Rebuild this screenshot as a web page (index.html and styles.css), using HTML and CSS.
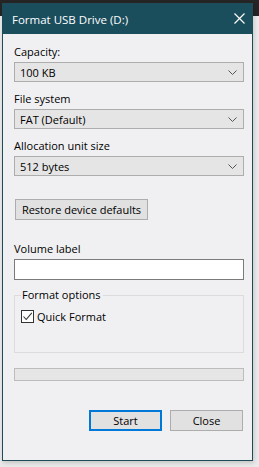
FILE: index.html
```html
<!doctype html>
<html lang="en">
	<head>
		<meta charset="UTF-8" />
		<title>Format USB Drive (D:)</title>
		<link rel="stylesheet" href="styles.css">
	</head>
	<body>
		<div class="window">
			<div class="titlebar">
				<span class="title">Format USB Drive (D:)</span>
				<svg class="close-x" width="11" height="11" viewBox="0 0 11 11">
					<path d="M0.5 0.5 L10.5 10.5 M10.5 0.5 L0.5 10.5" stroke="#fff" stroke-width="1.2" fill="none"/>
				</svg>
			</div>

			<div class="content">
				<label class="field-label">Capacity:</label>
				<div class="select">
					<span>100 KB</span>
					<svg class="chevron" width="9" height="5" viewBox="0 0 9 5"><path d="M0.5 0.5 L4.5 4.5 L8.5 0.5" stroke="#555" fill="none"/></svg>
				</div>

				<label class="field-label">File system</label>
				<div class="select">
					<span>FAT (Default)</span>
					<svg class="chevron" width="9" height="5" viewBox="0 0 9 5"><path d="M0.5 0.5 L4.5 4.5 L8.5 0.5" stroke="#555" fill="none"/></svg>
				</div>

				<label class="field-label">Allocation unit size</label>
				<div class="select">
					<span>512 bytes</span>
					<svg class="chevron" width="9" height="5" viewBox="0 0 9 5"><path d="M0.5 0.5 L4.5 4.5 L8.5 0.5" stroke="#555" fill="none"/></svg>
				</div>

				<button class="btn restore">Restore device defaults</button>

				<label class="field-label volume">Volume label</label>
				<div class="textbox"></div>

				<fieldset class="options">
					<legend>Format options</legend>
					<div class="check-row">
						<span class="checkbox">
							<svg width="11" height="11" viewBox="0 0 11 11"><path d="M1.5 5.5 L4.2 8.5 L9.8 1.8" stroke="#333" stroke-width="1.1" fill="none"/></svg>
						</span>
						<span>Quick Format</span>
					</div>
				</fieldset>

				<div class="progress"></div>

				<div class="actions">
					<button class="btn start">Start</button>
					<button class="btn">Close</button>
				</div>
			</div>
		</div>
	</body>
</html>
```

FILE: styles.css
```css
body {
	margin: 0;
	height: 467px;
	overflow: hidden;
	background: linear-gradient(to bottom, #252525 0, #252525 16px, #e9e9e9 16px);
	font-family: 'Segoe UI', 'Open Sans', sans-serif;
	font-size: 11px;
	color: #000;
}
.window {
	margin: 3px 0 0 2px;
	width: 249px;
	height: 456px;
	border: 1px solid #1f4c59;
	background: #f0f0f2;
	box-shadow: 1px 2px 4px rgba(0, 0, 0, 0.15);
}
.titlebar {
	height: 30px;
	background: #1b4e5d;
	display: flex;
	align-items: center;
	padding: 0 0 0 9px;
}
.title {
	color: #fff;
	font-size: 11.5px;
	flex: 1;
}
.close-x {
	margin-right: 7px;
	margin-top: -1px;
}
.content {
	padding: 10px 8px 0 11px;
}
.field-label {
	display: block;
	line-height: 16px;
	margin-bottom: 2px;
}
.select {
	height: 18px;
	width: 217px;
	border: 1px solid #adadad;
	background: #e5e5e5;
	display: flex;
	align-items: center;
	justify-content: space-between;
	padding: 0 6px 0 5px;
	margin-bottom: 9px;
}
.chevron {
	margin-top: 1px;
}
.btn {
	font-family: inherit;
	font-size: 11px;
	color: #000;
	background: #e1e1e1;
	border: 1px solid #adadad;
	height: 21px;
	padding: 0;
	width: 73px;
}
.restore {
	display: block;
	margin: 23px 0 0 1px;
	width: 133px;
}
.volume {
	margin-top: 21px;
}
.textbox {
	height: 19px;
	width: 228px;
	border: 1px solid #7a7a7a;
	background: #fff;
}
.options {
	margin: 7px 0 0 0;
	padding: 0 0 0 6px;
	width: 230px;
	height: 66px;
	border: 1px solid #dcdcdc;
	box-sizing: border-box;
}
.options legend {
	padding: 0 2px 0 1px;
	line-height: 16px;
}
.check-row {
	display: flex;
	align-items: center;
	margin-top: 6px;
}
.checkbox {
	width: 11px;
	height: 11px;
	border: 1px solid #333;
	background: #fff;
	display: flex;
	margin-right: 3px;
}
.progress {
	margin-top: 15px;
	height: 11px;
	width: 228px;
	border: 1px solid #bcbcbc;
	background: #e6e6e6;
}
.actions {
	display: flex;
	justify-content: flex-end;
	gap: 8px;
	margin: 29px 0 0 0;
	padding-right: 1px;
}
.start {
	border: 2px solid #0078d7;
}
```
